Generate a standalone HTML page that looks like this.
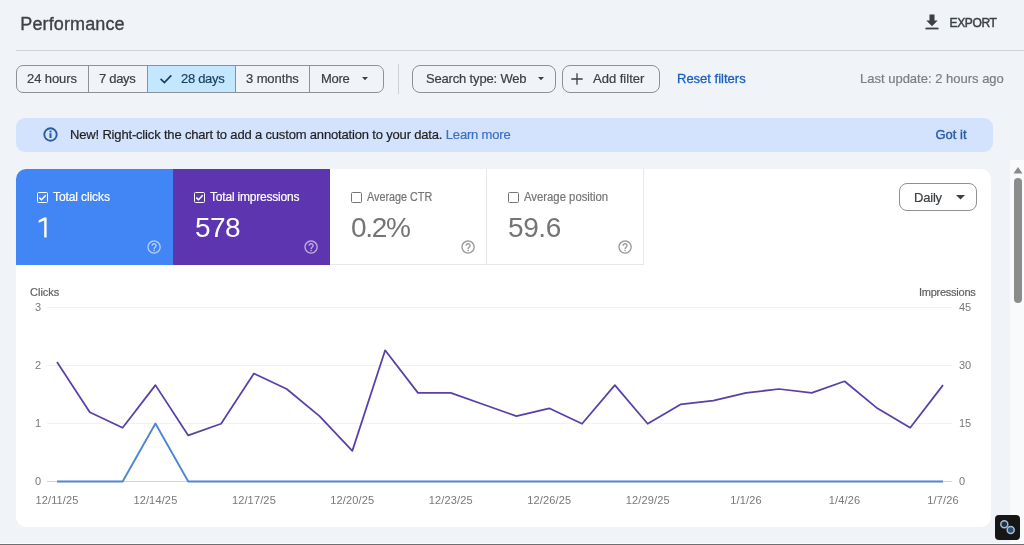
<!DOCTYPE html>
<html><head><meta charset="utf-8">
<style>
html,body{margin:0;padding:0;width:1024px;height:545px;overflow:hidden;background:#f0f3f7;font-family:"Liberation Sans",sans-serif;}
.a{position:absolute;}
.t{position:absolute;white-space:nowrap;line-height:1;-webkit-text-stroke-width:0.2px;}
.v{-webkit-text-stroke-width:0 !important;}
.seg{position:absolute;top:65px;height:28px;border:1px solid #8e9094;border-radius:7px;left:16px;width:368px;box-sizing:border-box;}
.chip{position:absolute;top:65px;height:28px;border:1px solid #8e9094;border-radius:8px;box-sizing:border-box;}
.mt{position:absolute;top:169px;height:96px;width:157px;}
.cb{position:absolute;width:11px;height:11px;box-sizing:border-box;border:1.4px solid #fff;border-radius:1.5px;}
</style></head><body><div style="position:absolute;left:0;top:0;width:1024px;height:545px;overflow:hidden;will-change:transform">

<!-- header -->
<div class="t" style="left:20.3px;top:15px;font-size:18px;color:#3f4246;letter-spacing:0.12px;-webkit-text-stroke:0.35px #3f4246">Performance</div>
<svg class="a" style="left:924px;top:13px" width="16" height="18" viewBox="0 0 16 18">
  <path d="M5.5 1.5h5v6h3.2L8 13.2 2.3 7.5h3.2z" fill="#3c4043"/>
  <rect x="1.5" y="14.6" width="13" height="1.8" fill="#3c4043"/>
</svg>
<div class="t" style="left:949.5px;top:17px;font-size:12px;color:#3c4043;letter-spacing:-0.35px;-webkit-text-stroke:0.45px #3c4043">EXPORT</div>
<div class="a" style="left:16px;top:50px;width:1008px;height:1px;background:#ced1d5"></div>

<!-- toolbar -->
<div class="seg"></div>
<div class="a" style="left:148px;top:66px;width:87px;height:26px;background:#c2e7ff"></div>
<div class="a" style="left:88px;top:66px;width:1px;height:26px;background:#8e9094"></div>
<div class="a" style="left:147px;top:66px;width:1px;height:26px;background:#8e9094"></div>
<div class="a" style="left:235px;top:66px;width:1px;height:26px;background:#8e9094"></div>
<div class="a" style="left:309px;top:66px;width:1px;height:26px;background:#8e9094"></div>
<div class="t" style="left:27px;top:72px;font-size:13px;color:#3c4043;letter-spacing:-0.1px">24 hours</div>
<div class="t" style="left:99px;top:72px;font-size:13px;color:#3c4043;letter-spacing:-0.3px">7 days</div>
<svg class="a" style="left:159px;top:72px" width="14" height="14" viewBox="0 0 14 14"><path d="M1.6 6.9L5.4 10.5L12.3 3.4" fill="none" stroke="#1b3d5c" stroke-width="1.7"/></svg>
<div class="t" style="left:181px;top:72px;font-size:13px;color:#1b3d5c;letter-spacing:-0.3px">28 days</div>
<div class="t" style="left:246px;top:72px;font-size:13px;color:#3c4043;letter-spacing:-0.1px">3 months</div>
<div class="t" style="left:321px;top:72px;font-size:13px;color:#3c4043;letter-spacing:-0.3px">More</div>
<svg class="a" style="left:361px;top:77px" width="8" height="4" viewBox="0 0 8 4"><path d="M1 0h6L4 3.2z" fill="#3c4043"/></svg>

<div class="a" style="left:398px;top:64px;width:1px;height:30px;background:#cfd1d4"></div>
<div class="chip" style="left:412px;width:144px"></div>
<div class="t" style="left:426px;top:72px;font-size:13px;color:#3c4043;letter-spacing:-0.17px">Search type: Web</div>
<svg class="a" style="left:537px;top:77px" width="8" height="4" viewBox="0 0 8 4"><path d="M1 0h6L4 3.2z" fill="#3c4043"/></svg>
<div class="chip" style="left:562px;width:98px"></div>
<svg class="a" style="left:571px;top:73px" width="12" height="12" viewBox="0 0 12 12"><path d="M6 0.3v11.4M0.3 6h11.4" stroke="#3c4043" stroke-width="1.3"/></svg>
<div class="t" style="left:593px;top:72px;font-size:13px;color:#3c4043">Add filter</div>
<div class="t" style="left:677px;top:72px;font-size:13px;color:#1b5fc1;font-weight:400;-webkit-text-stroke:0.3px #1b5fc1">Reset filters</div>
<div class="t" style="left:860px;top:72px;font-size:13px;color:#7b7e82">Last update: 2 hours ago</div>

<!-- banner -->
<div class="a" style="left:16px;top:117.6px;width:977px;height:34.4px;background:#d3e3fd;border-radius:9px"></div>
<svg class="a" style="left:43px;top:127px" width="15" height="15" viewBox="0 0 15 15">
  <circle cx="7.5" cy="7.5" r="6.2" fill="none" stroke="#2a5aa8" stroke-width="1.9"/>
  <rect x="6.5" y="6.2" width="2" height="4.8" fill="#2a5aa8"/>
  <rect x="6.5" y="3.6" width="2" height="1.8" fill="#2a5aa8"/>
</svg>
<div class="t" style="left:70px;top:128px;font-size:13px;color:#1f1f1f;letter-spacing:-0.17px">New! Right-click the chart to add a custom annotation to your data. <span style="color:#3f6fc6">Learn more</span></div>
<div class="t" style="left:935.5px;top:128px;font-size:13px;color:#2b5ca8;-webkit-text-stroke:0.4px #2b5ca8">Got it</div>

<!-- main card -->
<div class="a" style="left:16px;top:169px;width:975px;height:358px;background:#fff;border-radius:10px;overflow:hidden">
</div>
<div class="mt" style="left:16px;background:#4285f4;border-top-left-radius:10px"></div>
<div class="mt" style="left:173px;background:#5e35b1"></div>
<div class="mt" style="left:330px;width:157px;box-sizing:border-box;border-right:1px solid #e8e8e8;border-bottom:1px solid #e8e8e8"></div>
<div class="mt" style="left:487px;width:157px;box-sizing:border-box;border-right:1px solid #e8e8e8;border-bottom:1px solid #e8e8e8"></div>

<div class="cb" style="left:37px;top:192px"></div>
<svg class="a" style="left:37px;top:192px" width="11" height="11"><path d="M2.3 5.6l2.2 2.2L8.8 3.3" fill="none" stroke="#fff" stroke-width="1.5"/></svg>
<div class="t" style="left:53px;top:191px;font-size:12px;color:#fff;letter-spacing:-0.1px">Total clicks</div>
<svg class="a" style="left:30px;top:210px" width="40" height="35"><path d="M14.2 7.5H16.6V27.6H14.2V10.6L8.6 12.7V10.5L14 7.5z" fill="#fff"/></svg>
<svg class="a" style="left:146.2px;top:238.9px" width="16.2" height="16.2" viewBox="0 0 24 24"><path d="M11 18h2v-2h-2v2zm1-16C6.48 2 2 6.48 2 12s4.48 10 10 10 10-4.48 10-10S17.52 2 12 2zm0 18c-4.41 0-8-3.59-8-8s3.59-8 8-8 8 3.59 8 8-3.59 8-8 8zm0-14c-2.21 0-4 1.79-4 4h2c0-1.1.9-2 2-2s2 .9 2 2c0 2-3 1.75-3 5h2c0-2.25 3-2.5 3-5 0-2.21-1.79-4-4-4z" fill="rgba(255,255,255,.6)"/></svg>

<div class="cb" style="left:194px;top:192px"></div>
<svg class="a" style="left:194px;top:192px" width="11" height="11"><path d="M2.3 5.6l2.2 2.2L8.8 3.3" fill="none" stroke="#fff" stroke-width="1.5"/></svg>
<div class="t" style="left:210px;top:191px;font-size:12px;color:#fff;letter-spacing:-0.2px">Total impressions</div>
<div class="t v" style="left:195px;top:214px;font-size:28px;color:#fff;letter-spacing:-0.6px">578</div>
<svg class="a" style="left:303.2px;top:238.9px" width="16.2" height="16.2" viewBox="0 0 24 24"><path d="M11 18h2v-2h-2v2zm1-16C6.48 2 2 6.48 2 12s4.48 10 10 10 10-4.48 10-10S17.52 2 12 2zm0 18c-4.41 0-8-3.59-8-8s3.59-8 8-8 8 3.59 8 8-3.59 8-8 8zm0-14c-2.21 0-4 1.79-4 4h2c0-1.1.9-2 2-2s2 .9 2 2c0 2-3 1.75-3 5h2c0-2.25 3-2.5 3-5 0-2.21-1.79-4-4-4z" fill="rgba(255,255,255,.6)"/></svg>

<div class="cb" style="left:351px;top:192px;border-color:#757575"></div>
<div class="t" style="left:366.5px;top:191px;font-size:12px;color:#757575;transform:scaleX(.9);transform-origin:0 0">Average CTR</div>
<div class="t v" style="left:351px;top:214px;font-size:28px;color:#747474;letter-spacing:-1.3px">0.2%</div>
<svg class="a" style="left:460.2px;top:238.9px" width="16.2" height="16.2" viewBox="0 0 24 24"><path d="M11 18h2v-2h-2v2zm1-16C6.48 2 2 6.48 2 12s4.48 10 10 10 10-4.48 10-10S17.52 2 12 2zm0 18c-4.41 0-8-3.59-8-8s3.59-8 8-8 8 3.59 8 8-3.59 8-8 8zm0-14c-2.21 0-4 1.79-4 4h2c0-1.1.9-2 2-2s2 .9 2 2c0 2-3 1.75-3 5h2c0-2.25 3-2.5 3-5 0-2.21-1.79-4-4-4z" fill="#9a9a9a"/></svg>

<div class="cb" style="left:508px;top:192px;border-color:#757575"></div>
<div class="t" style="left:523.5px;top:191px;font-size:12px;color:#757575;transform:scaleX(.943);transform-origin:0 0">Average position</div>
<div class="t v" style="left:508px;top:214px;font-size:28px;color:#747474;letter-spacing:-0.4px">59.6</div>
<svg class="a" style="left:617.2px;top:238.9px" width="16.2" height="16.2" viewBox="0 0 24 24"><path d="M11 18h2v-2h-2v2zm1-16C6.48 2 2 6.48 2 12s4.48 10 10 10 10-4.48 10-10S17.52 2 12 2zm0 18c-4.41 0-8-3.59-8-8s3.59-8 8-8 8 3.59 8 8-3.59 8-8 8zm0-14c-2.21 0-4 1.79-4 4h2c0-1.1.9-2 2-2s2 .9 2 2c0 2-3 1.75-3 5h2c0-2.25 3-2.5 3-5 0-2.21-1.79-4-4-4z" fill="#9a9a9a"/></svg>

<!-- daily -->
<div class="a" style="left:899px;top:183px;width:78px;height:28px;box-sizing:border-box;border:1px solid #8e9094;border-radius:8px"></div>
<div class="t" style="left:914px;top:191px;font-size:13px;color:#3c4043;letter-spacing:-0.2px">Daily</div>
<svg class="a" style="left:956px;top:195px" width="9" height="5" viewBox="0 0 9 5"><path d="M0 0h9L4.5 4.5z" fill="#3c4043"/></svg>

<!-- chart -->
<svg class="a" style="left:0;top:0" width="1024" height="545">
  <g stroke="#f2f2f2" stroke-width="1">
    <line x1="47" y1="307.5" x2="952" y2="307.5"/>
    <line x1="47" y1="365.5" x2="952" y2="365.5"/>
    <line x1="47" y1="423.5" x2="952" y2="423.5"/>
  </g>
  <line x1="47" y1="481.5" x2="952" y2="481.5" stroke="#d2d2d2" stroke-width="1"/>
  <polyline fill="none" stroke="#4f86d4" stroke-width="1.9" stroke-linejoin="round" points="57,481.5 122.63,481.5 155.44,423.5 188.26,481.5 943,481.5"/>
  <polyline fill="none" stroke="#5a3fa8" stroke-width="1.75" stroke-linejoin="round" points="57.00,361.93 89.81,412.20 122.63,427.67 155.44,385.13 188.26,435.40 221.07,423.80 253.89,373.53 286.70,389.00 319.52,416.07 352.33,450.87 385.15,350.33 417.96,392.87 450.78,392.87 483.59,404.47 516.41,416.07 549.22,408.33 582.04,423.80 614.85,385.13 647.67,423.80 680.48,404.47 713.30,400.60 746.11,392.87 778.93,389.00 811.74,392.87 844.56,381.27 877.37,408.33 910.19,427.67 943.00,385.13"/>
</svg>
<div class="t" style="left:30px;top:287px;font-size:11px;color:#616161">Clicks</div>
<div class="t" style="left:919px;top:287px;font-size:11px;color:#616161;letter-spacing:-0.25px">Impressions</div>
<div class="t" style="left:35px;top:302px;font-size:11px;color:#787878;-webkit-text-stroke-width:0">3</div>
<div class="t" style="left:35px;top:360px;font-size:11px;color:#787878;-webkit-text-stroke-width:0">2</div>
<div class="t" style="left:35px;top:418px;font-size:11px;color:#787878;-webkit-text-stroke-width:0">1</div>
<div class="t" style="left:35px;top:476px;font-size:11px;color:#787878;-webkit-text-stroke-width:0">0</div>
<div class="t" style="left:959px;top:302px;font-size:11px;color:#787878;-webkit-text-stroke-width:0">45</div>
<div class="t" style="left:959px;top:360px;font-size:11px;color:#787878;-webkit-text-stroke-width:0">30</div>
<div class="t" style="left:959px;top:418px;font-size:11px;color:#787878;-webkit-text-stroke-width:0">15</div>
<div class="t" style="left:959px;top:476px;font-size:11px;color:#787878;-webkit-text-stroke-width:0">0</div>

<div class="a" style="left:0;top:494.5px;width:1024px;height:14px;font-size:11px;color:#787878;line-height:1;letter-spacing:0.15px">
  <span class="t v" style="left:57px;transform:translateX(-50%)">12/11/25</span>
  <span class="t v" style="left:155.4px;transform:translateX(-50%)">12/14/25</span>
  <span class="t v" style="left:253.9px;transform:translateX(-50%)">12/17/25</span>
  <span class="t v" style="left:352.3px;transform:translateX(-50%)">12/20/25</span>
  <span class="t v" style="left:450.8px;transform:translateX(-50%)">12/23/25</span>
  <span class="t v" style="left:549.2px;transform:translateX(-50%)">12/26/25</span>
  <span class="t v" style="left:647.7px;transform:translateX(-50%)">12/29/25</span>
  <span class="t v" style="left:746.1px;transform:translateX(-50%)">1/1/26</span>
  <span class="t v" style="left:844.6px;transform:translateX(-50%)">1/4/26</span>
  <span class="t v" style="left:943px;transform:translateX(-50%)">1/7/26</span>
</div>

<!-- scrollbar -->
<div class="a" style="left:1010px;top:160px;width:14px;height:385px;background:#f9fafb"></div>
<svg class="a" style="left:1013px;top:166px" width="10" height="8" viewBox="0 0 10 8"><path d="M0.5 7.5L5 1l4.5 6.5z" fill="#8a8a8a"/></svg>
<div class="a" style="left:1014px;top:178px;width:8px;height:125px;background:#8c8c8c;border-radius:4px"></div>

<!-- floating icon -->
<div class="a" style="left:995px;top:515px;width:25px;height:25px;background:#161616;border-radius:4px"></div>
<svg class="a" style="left:995px;top:515px" width="25" height="25" viewBox="0 0 25 25">
  <circle cx="9.3" cy="9.3" r="3.5" fill="#1d3247" stroke="#a7bdd3" stroke-width="1.5"/>
  <circle cx="15.7" cy="15.1" r="3.5" fill="#2a4f74" stroke="#a7bdd3" stroke-width="1.5"/>
</svg>
<div class="a" style="left:0;top:543px;width:1024px;height:1px;background:#fafbfc"></div>
<div class="a" style="left:0;top:544px;width:1024px;height:1px;background:#6d6f73"></div>
</div></body></html>
